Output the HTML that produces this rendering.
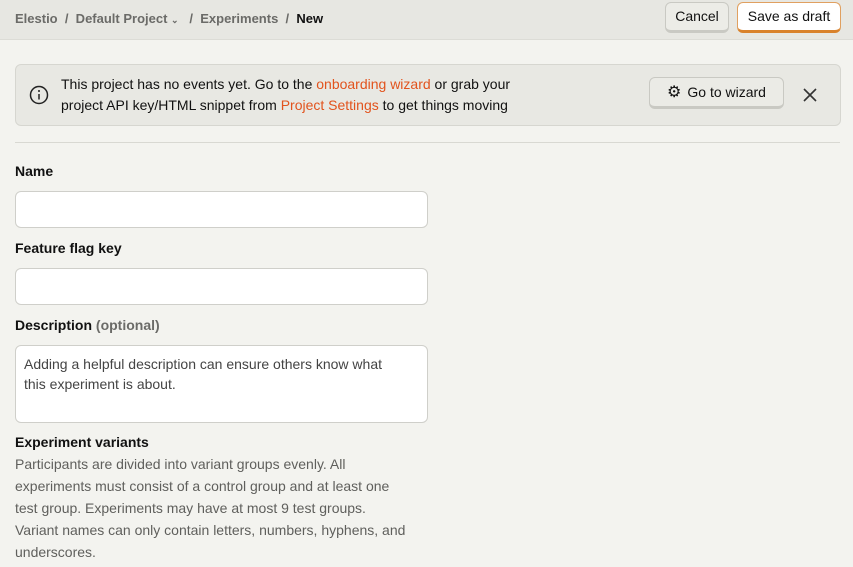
<!DOCTYPE html>
<html><head><style>
body{margin:0;width:853px;height:567px;overflow:hidden;background:#f3f3ef;font-family:"Liberation Sans",sans-serif;color:#111;font-size:14px}
.top{position:absolute;left:0;top:0;width:853px;height:39px;background:#e7e7e2;border-bottom:1px solid #dcdcd6}
.bc{position:absolute;left:15px;top:11px;font-size:13px;color:#6b6b68;font-weight:bold}
.bc b{color:#111}
.btn{position:absolute;top:2px;height:27px;border:1px solid #c9c9c3;border-bottom:3px solid #c9c9c3;border-radius:6px;background:#ececE7;font-size:14px;line-height:27px;text-align:center;box-sizing:content-box}
.banner{position:absolute;left:15px;top:64px;width:824px;height:60px;background:#e8e8e3;border:1px solid #d6d6d0;border-radius:6px}
.banner .t{position:absolute;left:45px;top:9px;line-height:21px;font-size:14px}
.o{color:#e2531d}
hr{position:absolute;left:15px;top:142px;width:825px;margin:0;border:0;border-top:1px solid #d8d8d2}
.lbl{position:absolute;left:15px;font-weight:bold;font-size:14px}
.inp{position:absolute;left:15px;width:411px;height:35px;background:#fff;border:1px solid #cfcfca;border-radius:6px}
.p{position:absolute;left:15px;width:395px;font-size:14px;line-height:22px;color:#5f5f5c}
</style></head><body>
<div class="top">
<div class="bc">Elestio &nbsp;/&nbsp; Default Project <span style="font-size:9px">&#8964;</span> &nbsp;&nbsp;/&nbsp; Experiments &nbsp;/&nbsp; <b>New</b></div>
<div class="btn" style="left:665px;width:62px">Cancel</div>
<div class="btn" style="left:737px;width:102px;background:#fff;border-color:#d9822b;border-top-color:#e0a060;border-left-color:#e0a060;border-right-color:#e0a060">Save as draft</div>
</div>
<div class="banner">
<svg style="position:absolute;left:13px;top:20px" width="20" height="20" viewBox="0 0 20 20"><circle cx="10" cy="10" r="8.5" fill="none" stroke="#222" stroke-width="1.5"/><line x1="10" y1="9" x2="10" y2="14.5" stroke="#222" stroke-width="1.5"/><circle cx="10" cy="6" r="1" fill="#222"/></svg>
<div class="t">This project has no events yet. Go to the <span class="o">onboarding wizard</span> or grab your<br>project API key/HTML snippet from <span class="o">Project Settings</span> to get things moving</div>
<div class="btn" style="left:633px;top:12px;width:133px;background:#ebebE6;height:28px;line-height:28px"><span style="font-size:16px;margin-right:6px">⚙</span>Go to wizard</div>
<svg style="position:absolute;left:787px;top:23px" width="14" height="14"><path d="M1 1L13 13M13 1L1 13" stroke="#333" stroke-width="1.6"/></svg>
</div>
<hr>
<div class="lbl" style="top:163px">Name</div>
<div class="inp" style="top:191px"></div>
<div class="lbl" style="top:240px">Feature flag key</div>
<div class="inp" style="top:268px"></div>
<div class="lbl" style="top:317px">Description <span style="color:#6b6b68">(optional)</span></div>
<div class="inp" style="top:345px;height:76px"><div style="padding:8px 30px 8px 8px;line-height:20px;color:#444">Adding a helpful description can ensure others know what this experiment is about.</div></div>
<div class="lbl" style="top:434px">Experiment variants</div>
<div class="p" style="top:453px">Participants are divided into variant groups evenly. All experiments must consist of a control group and at least one test group. Experiments may have at most 9 test groups. Variant names can only contain letters, numbers, hyphens, and underscores.</div>
</body></html>
